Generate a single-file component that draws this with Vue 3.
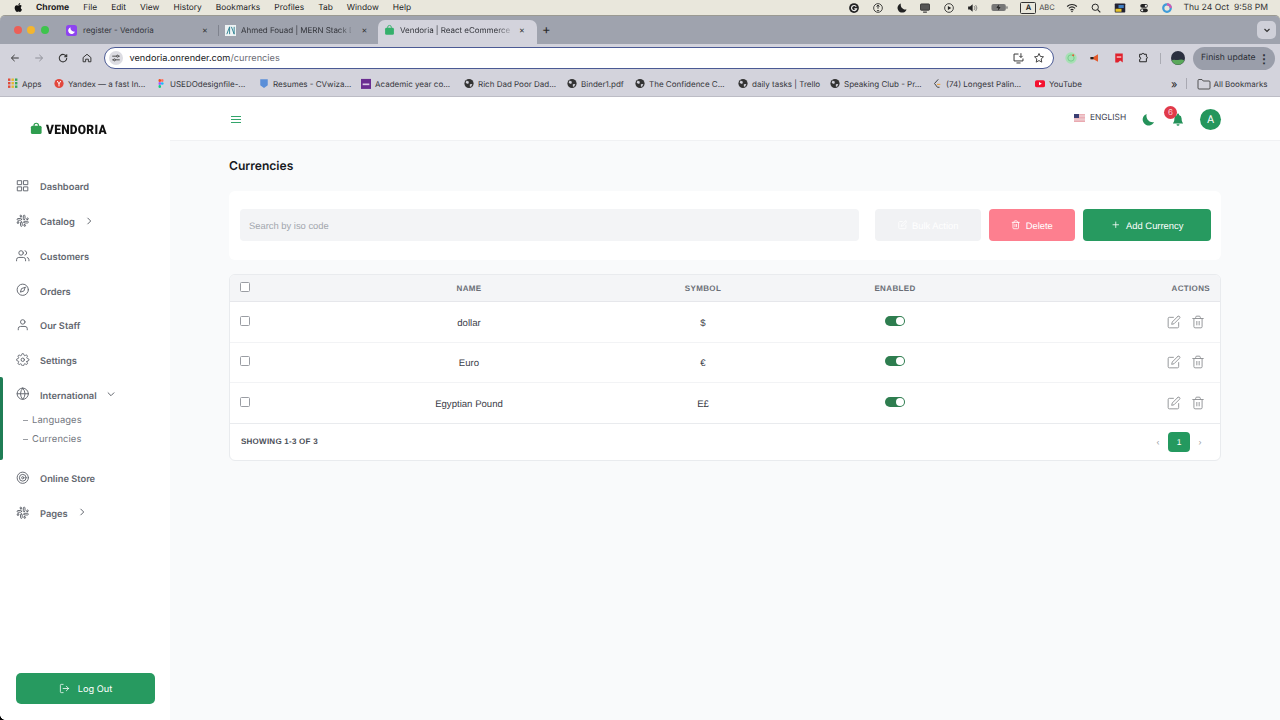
<script setup>
const menus = ['File','Edit','View','History','Bookmarks','Profiles','Tab','Window','Help']
const bookmarks = [
  { label:'Yandex — a fast In...', w:102, kind:'yandex' },
  { label:'USEDOdesignfile-...', w:103, kind:'figma' },
  { label:'Resumes - CVwiza...', w:102, kind:'cv' },
  { label:'Academic year co...', w:103, kind:'tuts' },
  { label:'Rich Dad Poor Dad...', w:103, kind:'globe' },
  { label:'Binder1.pdf', w:68, kind:'globe' },
  { label:'The Confidence C...', w:103, kind:'globe' },
  { label:'daily tasks | Trello', w:92, kind:'globe' },
  { label:'Speaking Club - Pr...', w:102, kind:'globe' },
  { label:'(74) Longest Palin...', w:103, kind:'leet' },
  { label:'YouTube', w:60, kind:'yt' }
]
const P = {
  grid:'<rect x="3" y="3" width="7" height="7"/><rect x="14" y="3" width="7" height="7"/><rect x="14" y="14" width="7" height="7"/><rect x="3" y="14" width="7" height="7"/>',
  slack:'<path d="M14.5 10c-.83 0-1.5-.67-1.5-1.5v-5c0-.83.67-1.5 1.5-1.5s1.5.67 1.5 1.5v5c0 .83-.67 1.5-1.5 1.5z"/><path d="M20.5 10H19V8.5c0-.83.67-1.5 1.5-1.5s1.5.67 1.5 1.5-.67 1.5-1.5 1.5z"/><path d="M9.5 14c.83 0 1.5.67 1.5 1.5v5c0 .83-.67 1.5-1.5 1.5S8 21.33 8 20.5v-5c0-.83.67-1.5 1.5-1.5z"/><path d="M3.5 14H5v1.5c0 .83-.67 1.5-1.5 1.5S2 16.33 2 15.5 2.67 14 3.5 14z"/><path d="M14 14.5c0-.83.67-1.5 1.5-1.5h5c.83 0 1.5.67 1.5 1.5s-.67 1.5-1.5 1.5h-5c-.83 0-1.5-.67-1.5-1.5z"/><path d="M15.5 19H14v1.5c0 .83.67 1.5 1.5 1.5s1.5-.67 1.5-1.5-.67-1.5-1.5-1.5z"/><path d="M10 9.5C10 8.67 9.33 8 8.5 8h-5C2.67 8 2 8.67 2 9.5S2.67 11 3.5 11h5c.83 0 1.5-.67 1.5-1.5z"/><path d="M8.5 5H10V3.5C10 2.67 9.33 2 8.5 2S7 2.67 7 3.5 7.67 5 8.5 5z"/>',
  users:'<path d="M17 21v-2a4 4 0 0 0-4-4H5a4 4 0 0 0-4 4v2"/><circle cx="9" cy="7" r="4"/><path d="M23 21v-2a4 4 0 0 0-3-3.87"/><path d="M16 3.13a4 4 0 0 1 0 7.75"/>',
  compass:'<circle cx="12" cy="12" r="10"/><polygon points="16.24 7.76 14.12 14.12 7.76 16.24 9.88 9.88 16.24 7.76"/>',
  user:'<path d="M20 21v-2a4 4 0 0 0-4-4H8a4 4 0 0 0-4 4v2"/><circle cx="12" cy="7" r="4"/>',
  settings:'<circle cx="12" cy="12" r="3"/><path d="M19.4 15a1.65 1.65 0 0 0 .33 1.82l.06.06a2 2 0 0 1 0 2.83 2 2 0 0 1-2.83 0l-.06-.06a1.65 1.65 0 0 0-1.82-.33 1.65 1.65 0 0 0-1 1.51V21a2 2 0 0 1-2 2 2 2 0 0 1-2-2v-.09A1.65 1.65 0 0 0 9 19.4a1.65 1.65 0 0 0-1.82.33l-.06.06a2 2 0 0 1-2.83 0 2 2 0 0 1 0-2.83l.06-.06a1.65 1.65 0 0 0 .33-1.82 1.65 1.65 0 0 0-1.51-1H3a2 2 0 0 1-2-2 2 2 0 0 1 2-2h.09A1.65 1.65 0 0 0 4.6 9a1.65 1.65 0 0 0-.33-1.82l-.06-.06a2 2 0 0 1 0-2.83 2 2 0 0 1 2.83 0l.06.06a1.65 1.65 0 0 0 1.82.33H9a1.65 1.65 0 0 0 1-1.51V3a2 2 0 0 1 2-2 2 2 0 0 1 2 2v.09a1.65 1.65 0 0 0 1 1.51 1.65 1.65 0 0 0 1.82-.33l.06-.06a2 2 0 0 1 2.83 0 2 2 0 0 1 0 2.83l-.06.06a1.65 1.65 0 0 0-.33 1.82V9a1.65 1.65 0 0 0 1.51 1H21a2 2 0 0 1 2 2 2 2 0 0 1-2 2h-.09a1.65 1.65 0 0 0-1.51 1z"/>',
  globe:'<circle cx="12" cy="12" r="10"/><line x1="2" y1="12" x2="22" y2="12"/><path d="M12 2a15.3 15.3 0 0 1 4 10 15.3 15.3 0 0 1-4 10 15.3 15.3 0 0 1-4-10 15.3 15.3 0 0 1 4-10z"/>',
  target:'<circle cx="12" cy="12" r="10"/><circle cx="12" cy="12" r="6"/><circle cx="12" cy="12" r="2"/>',
  edit:'<path d="M11 4H4a2 2 0 0 0-2 2v14a2 2 0 0 0 2 2h14a2 2 0 0 0 2-2v-7"/><path d="M18.5 2.5a2.121 2.121 0 0 1 3 3L12 15l-4 1 1-4 9.5-9.5z"/>',
  trash:'<polyline points="3 6 5 6 21 6"/><path d="M19 6v14a2 2 0 0 1-2 2H7a2 2 0 0 1-2-2V6m3 0V4a2 2 0 0 1 2-2h4a2 2 0 0 1 2 2v2"/><line x1="10" y1="11" x2="10" y2="17"/><line x1="14" y1="11" x2="14" y2="17"/>',
  logout:'<path d="M9 21H5a2 2 0 0 1-2-2V5a2 2 0 0 1 2-2h4"/><polyline points="16 17 21 12 16 7"/><line x1="21" y1="12" x2="9" y2="12"/>'
}
const nav = [
  { label:'Dashboard', icon:'grid' },
  { label:'Catalog', icon:'slack', chev:'right' },
  { label:'Customers', icon:'users' },
  { label:'Orders', icon:'compass' },
  { label:'Our Staff', icon:'user' },
  { label:'Settings', icon:'settings' },
  { label:'International', icon:'globe', chev:'down', open:true, children:['Languages','Currencies'] },
  { label:'Online Store', icon:'target' },
  { label:'Pages', icon:'slack', chev:'right' }
]
const rows = [
  { name:'dollar', symbol:'$' },
  { name:'Euro', symbol:'€' },
  { name:'Egyptian Pound', symbol:'E£' }
]
</script>

<template>
  <div class="screen">
    <div class="menubar">
      <div class="menu-left">
        <svg class="apple" viewBox="0 0 24 24"><path fill="#111" d="M17.05 12.5c0-2.5 2.05-3.7 2.14-3.76-1.17-1.7-2.98-1.94-3.62-1.96-1.54-.16-3 .9-3.78.9-.78 0-1.98-.88-3.26-.86-1.67.03-3.22.98-4.08 2.47-1.74 3.02-.45 7.5 1.25 9.95.83 1.2 1.82 2.55 3.11 2.5 1.25-.05 1.72-.8 3.23-.8s1.93.8 3.25.78c1.34-.03 2.19-1.22 3.01-2.43.95-1.39 1.34-2.74 1.36-2.81-.03-.01-2.6-1-2.61-3.98zM14.6 5.2c.69-.83 1.15-1.99 1.02-3.14-.99.04-2.19.66-2.9 1.49-.64.74-1.2 1.92-1.05 3.05 1.1.09 2.24-.56 2.93-1.4z"/></svg>
        <b>Chrome</b>
        <span v-for="m in menus" :key="m">{{ m }}</span>
      </div>
      <div class="menu-right">
        <svg class="st" viewBox="0 0 16 16"><circle cx="8" cy="8" r="6.5" fill="#222"/><path d="M11 6.2A3.4 3.4 0 1 0 11.4 9H8.4" fill="none" stroke="#eee" stroke-width="1.6"/></svg>
        <svg class="st" viewBox="0 0 16 16"><circle cx="8" cy="8" r="5.8" fill="none" stroke="#222" stroke-width="1.1"/><path d="M8 4v5M6.2 6.2 8 4l1.8 2.2M6.5 11.5h3" fill="none" stroke="#222" stroke-width="1.2"/></svg>
        <svg class="st" viewBox="0 0 16 16"><path fill="#222" d="M6.5 2a6.2 6.2 0 1 0 7.6 8A6.5 6.5 0 0 1 6.5 2z"/></svg>
        <svg class="st" viewBox="0 0 16 16"><rect x="2" y="2.5" width="12" height="8.5" rx="1" fill="#555" stroke="#222"/><path d="M5.5 13.5h5" stroke="#222" stroke-width="1.4"/></svg>
        <svg class="st" viewBox="0 0 16 16"><circle cx="8" cy="8" r="5.8" fill="none" stroke="#222" stroke-width="1.1"/><path d="M6.5 5.2 11 8l-4.5 2.8z" fill="#222"/></svg>
        <svg class="st" viewBox="0 0 16 16"><path d="M1.5 6h2.5L7.5 3v10L4 10H1.5z" fill="#222"/><path d="M9.5 5.5a3.5 3.5 0 0 1 0 5M11.5 4a6 6 0 0 1 0 8" fill="none" stroke="#666" stroke-width="1"/></svg>
        <svg class="batt" viewBox="0 0 20 10"><rect x=".5" y="1" width="16" height="8" rx="2.2" fill="#777"/><rect x="17" y="3.5" width="1.5" height="3" rx=".7" fill="#777"/><path d="M9 1.8 6 5.4h2.4L7.6 8.2l3-3.6H8.2z" fill="#111"/></svg>
        <span class="ime">A</span>
        <span class="abc">ABC</span>
        <svg class="st" viewBox="0 0 16 16"><path d="M1.5 6a9.5 9.5 0 0 1 13 0M3.8 8.4a6.3 6.3 0 0 1 8.4 0M6 10.7a3 3 0 0 1 4 0" fill="none" stroke="#222" stroke-width="1.4"/><circle cx="8" cy="12.8" r="1" fill="#222"/></svg>
        <svg class="st" viewBox="0 0 16 16"><circle cx="7" cy="7" r="4.2" fill="none" stroke="#222" stroke-width="1.3"/><path d="m10.2 10.2 3.5 3.5" stroke="#222" stroke-width="1.5"/></svg>
        <svg class="st" viewBox="0 0 16 16"><rect x="1" y="2" width="14" height="12" rx="1" fill="#223"/><rect x="2" y="9" width="8" height="4" fill="#e5c32a"/><rect x="6" y="4" width="7" height="4" fill="#3f7fc4"/></svg>
        <svg class="st" viewBox="0 0 16 16"><rect x="3" y="2.5" width="10" height="5" rx="2.5" fill="#222"/><rect x="3" y="8.5" width="10" height="5" rx="2.5" fill="#222"/><circle cx="10.5" cy="5" r="1.5" fill="#eee"/><circle cx="5.5" cy="11" r="1.5" fill="#eee"/></svg>
        <svg class="st" viewBox="0 0 16 16"><circle cx="8" cy="8" r="5" fill="none" stroke="#3f9bd8" stroke-width="3"/><path d="M8 3a5 5 0 0 1 5 5" fill="none" stroke="#d45bb0" stroke-width="3"/></svg>
        <span class="clock">Thu 24 Oct</span>
        <span class="clock clock2">9:58 PM</span>
      </div>
    </div>

    <div class="window">
      <div class="tabstrip">
        <div class="traffic"><i class="r"></i><i class="y"></i><i class="g"></i></div>
        <div class="tab tab-a">
          <span class="fav-purple"><svg viewBox="0 0 12 12"><path fill="#fff" d="M5 2.4a3.8 3.8 0 1 0 4.8 4.8A4 4 0 0 1 5 2.4z"/></svg></span>
          <span class="tab-t">register - Vendoria</span>
          <span class="x">✕</span>
        </div>
        <i class="tab-sep"></i>
        <div class="tab tab-b">
          <span class="fav-ahmed"><svg viewBox="0 0 12 12"><path d="M2 10 5 2v8M7 2l3 8V2" fill="none" stroke="#2a7f8f" stroke-width="1"/></svg></span>
          <span class="tab-t">Ahmed Fouad | MERN Stack D</span>
          <span class="x">✕</span>
        </div>
        <div class="tab tab-c">
          <svg class="fav" viewBox="0 0 12 12"><path d="M4 4V3a2 2 0 0 1 4 0v1" fill="none" stroke="#35b06c" stroke-width="1"/><rect x="1.2" y="3.6" width="9.6" height="7.6" rx="1.5" fill="#35b06c"/></svg>
          <span class="tab-t">Vendoria | React eCommerce</span>
          <span class="x">✕</span>
        </div>
        <span class="plus">+</span>
        <span class="tab-list"><svg viewBox="0 0 10 10"><path d="m2.5 4 2.5 2.5L7.5 4" fill="none" stroke="#333" stroke-width="1.2"/></svg></span>
      </div>

      <div class="toolbar">
        <svg class="tb" viewBox="0 0 16 16"><path d="M13 8H3.5M7.5 3.8 3.2 8l4.3 4.2" fill="none" stroke="#333" stroke-width="1.3"/></svg>
        <svg class="tb" viewBox="0 0 16 16"><path d="M3 8h9.5M8.5 3.8 12.8 8l-4.3 4.2" fill="none" stroke="#8d8e96" stroke-width="1.3"/></svg>
        <svg class="tb" viewBox="0 0 16 16"><path d="M12.6 6.2A5 5 0 1 0 13 8M13 3v3.4H9.6" fill="none" stroke="#333" stroke-width="1.4"/></svg>
        <svg class="tb" viewBox="0 0 16 16"><path d="M2.8 7.4 8 3l5.2 4.4V13H9.8V9.6H6.2V13H2.8z" fill="none" stroke="#333" stroke-width="1.3"/></svg>
        <div class="omni">
          <span class="site"><svg viewBox="0 0 12 12"><path d="M1.5 3.8h5M9 3.8h1.5M1.5 8.2H3M5.5 8.2h5" stroke="#333" stroke-width="1"/><circle cx="7.8" cy="3.8" r="1.2" fill="none" stroke="#333"/><circle cx="4.2" cy="8.2" r="1.2" fill="none" stroke="#333"/></svg></span>
          <span class="url">vendoria.onrender.com<em>/currencies</em></span>
          <svg class="om" viewBox="0 0 16 16"><path d="M8 2.5H2.5v8.5h11V8M5.5 13.5h5" fill="none" stroke="#333" stroke-width="1.2"/><path d="M11 1.5v5M9 4.8l2 2 2-2" fill="none" stroke="#333" stroke-width="1.2"/></svg>
          <svg class="om om2" viewBox="0 0 16 16"><path d="m8 2 1.8 3.9 4.2.5-3.1 2.9.8 4.2L8 11.4l-3.7 2.1.8-4.2L2 6.4l4.2-.5z" fill="none" stroke="#333" stroke-width="1.2"/></svg>
        </div>
        <svg class="ext e1" viewBox="0 0 16 16"><circle cx="8" cy="8" r="6.5" fill="#a8e0b5"/><circle cx="8" cy="8" r="3.6" fill="none" stroke="#6ecb86"/><circle cx="10.5" cy="4.8" r="1.2" fill="#e4593b"/></svg>
        <svg class="ext" viewBox="0 0 16 16"><path d="M2 6.5h4L12 3v10L6 9.8H2z" fill="#e4592b"/><path d="M2 6.5h4v3.3H2z" fill="#222"/></svg>
        <svg class="ext" viewBox="0 0 16 16"><path d="M3 2h10v12l-3.4-2.6L6.8 14H3z" fill="#e0212c"/><rect x="5" y="6" width="6" height="1.4" fill="#fff"/></svg>
        <svg class="ext" viewBox="0 0 16 16"><path d="M3.5 3h3.2a1.3 1.3 0 0 1 2.6 0h3.2v3.2a1.3 1.3 0 0 1 0 2.6V13H3.5V9.8a1.4 1.4 0 0 0 0-2.8z" fill="none" stroke="#222" stroke-width="1.3"/></svg>
        <i class="tb-sep"></i>
        <svg class="avatar-sm" viewBox="0 0 14 14"><circle cx="7" cy="7" r="7" fill="#2b3040"/><path d="M0.6 9.5C3 8 5 9.5 7 9s4-1 6.4.5A7 7 0 0 1 .6 9.5z" fill="#5aa85a"/></svg>
        <div class="finish"><span>Finish update</span><b>⋮</b></div>
      </div>

      <div class="bookbar">
        <div class="bm bm-apps">
          <svg class="bi" viewBox="0 0 10 10"><g v-for="yy in [0,3.5,7]" :key="yy"><rect :y="yy" x="0" width="2.4" height="2.4" fill="#e04b3a"/><rect :y="yy" x="3.5" width="2.4" height="2.4" fill="#e6b72e"/><rect :y="yy" x="7" width="2.4" height="2.4" fill="#3aa757"/></g></svg>
          <span>Apps</span>
        </div>
        <div v-for="b in bookmarks" :key="b.label" class="bm" :style="{ width: b.w + 'px' }">
          <svg v-if="b.kind==='yandex'" class="bi" viewBox="0 0 12 12"><circle cx="6" cy="6" r="5.5" fill="#e2463b"/><path d="M4 3l2 3.5L8 3M6 6.5V9.5" fill="none" stroke="#fff" stroke-width="1.2"/></svg>
          <svg v-else-if="b.kind==='figma'" class="bi" viewBox="0 0 12 12"><rect x="3" y="0.5" width="3" height="3.6" rx="1.5" fill="#f24e1e"/><rect x="6" y="0.5" width="3" height="3.6" rx="1.5" fill="#ff7262"/><rect x="3" y="4.2" width="3" height="3.6" rx="1.5" fill="#a259ff"/><circle cx="7.5" cy="6" r="1.6" fill="#1abcfe"/><rect x="3" y="7.9" width="3" height="3.6" rx="1.5" fill="#0acf83"/></svg>
          <svg v-else-if="b.kind==='cv'" class="bi" viewBox="0 0 12 12"><path d="M1.5 1h9v7L6 11.5 1.5 8z" fill="#5b8fd8"/></svg>
          <svg v-else-if="b.kind==='tuts'" class="bi" viewBox="0 0 12 12"><rect width="12" height="12" y=".5" fill="#6a2c91"/><rect x="2" y="6" width="8" height="2" fill="#d9c8e6"/></svg>
          <svg v-else-if="b.kind==='globe'" class="bi" viewBox="0 0 12 12"><circle cx="6" cy="6" r="5.5" fill="#333"/><path d="M3 2.5 6 4 5 6.5 2 5.5zM7 7l3-.5L8.5 10 7 9.5z" fill="#d3d3dc"/></svg>
          <svg v-else-if="b.kind==='leet'" class="bi" viewBox="0 0 12 12"><path d="M7.5 1 3 6l3.5 4.5H9" fill="none" stroke="#444" stroke-width="1.2"/><path d="M6 7h4" stroke="#f0a030" stroke-width="1.2"/></svg>
          <svg v-else class="bi" viewBox="0 0 12 12"><rect y="2" width="12" height="8.5" rx="2.2" fill="#f4112f"/><path d="M4.8 4.2v4L8.2 6.2z" fill="#fff"/></svg>
          <span>{{ b.label }}</span>
        </div>
        <span class="more">»</span>
        <i class="bk-sep"></i>
        <svg class="folder" viewBox="0 0 14 12"><path d="M1 2.5A1 1 0 0 1 2 1.5h3l1.2 1.5H12a1 1 0 0 1 1 1V10a1 1 0 0 1-1 1H2a1 1 0 0 1-1-1z" fill="none" stroke="#444" stroke-width=".9"/></svg>
        <span class="allb">All Bookmarks</span>
      </div>

      <div class="app">
        <aside class="sidebar">
          <div class="logo">
            <svg viewBox="0 0 14 14"><path d="M4.5 5V3.6a2.5 2.5 0 0 1 5 0V5" fill="none" stroke="#2f9e4f" stroke-width="1.3"/><rect x="1" y="3.8" width="12" height="9.4" rx="1.8" fill="#2f9e4f"/></svg>
            <span>VENDORIA</span>
          </div>
          <nav class="nav">
            <div v-for="n in nav" :key="n.label" class="nav-group" :class="{ open: n.open }">
              <div class="nav-item">
                <svg class="ni" viewBox="0 0 24 24" fill="none" stroke="currentColor" stroke-width="1.7" stroke-linecap="round" stroke-linejoin="round" v-html="P[n.icon]"></svg>
                <span class="nl">{{ n.label }}</span>
                <svg v-if="n.chev==='right'" class="chev" viewBox="0 0 10 10"><path d="m3.5 1.8 3.2 3.2-3.2 3.2" fill="none" stroke="currentColor" stroke-width="1"/></svg>
                <svg v-if="n.chev==='down'" class="chev" viewBox="0 0 10 10"><path d="m1.8 3.5 3.2 3.2 3.2-3.2" fill="none" stroke="currentColor" stroke-width="1"/></svg>
              </div>
              <div v-if="n.children" class="subs">
                <div v-for="c in n.children" :key="c" class="sub"><i></i>{{ c }}</div>
              </div>
            </div>
          </nav>
          <button class="logout">
            <svg viewBox="0 0 24 24" fill="none" stroke="currentColor" stroke-width="1.7" stroke-linecap="round" stroke-linejoin="round" v-html="P.logout"></svg>
            <span>Log Out</span>
          </button>
        </aside>

        <div class="main">
          <header class="topbar">
            <div class="burger"><i></i><i></i><i></i></div>
            <div class="top-right">
              <svg class="flag" viewBox="0 0 11 8"><rect width="11" height="8" fill="#f4f0f2"/><path d="M0 .6h11M0 2h11M0 3.4h11M0 4.8h11M0 6.2h11M0 7.5h11" stroke="#e58a94" stroke-width=".7"/><rect width="5" height="4" fill="#3a3f73"/></svg>
              <span class="lang">ENGLISH</span>
              <svg class="moon" viewBox="0 0 14 14"><path fill="#25925a" d="M5 1a6.4 6.4 0 1 0 8 8.6C8.6 11 3.6 6.6 5 1z"/></svg>
              <div class="bell-wrap">
                <svg class="bell" viewBox="0 0 12 13"><path fill="#25925a" d="M6 .6a1 1 0 0 1 1 1v.5A3.6 3.6 0 0 1 9.6 5.6c0 2.6.6 3.7 1.6 4.8H.8c1-1.1 1.6-2.2 1.6-4.8A3.6 3.6 0 0 1 5 2.1v-.5a1 1 0 0 1 1-1zM4.5 11.2h3a1.5 1.5 0 0 1-3 0z"/></svg>
                <span class="badge">6</span>
              </div>
              <span class="avatar">A</span>
            </div>
          </header>

          <section class="content">
            <h1>Currencies</h1>
            <div class="filters">
              <div class="search">Search by iso code</div>
              <button class="btn bulk">
                <svg viewBox="0 0 24 24" fill="none" stroke="currentColor" stroke-width="2" stroke-linecap="round" stroke-linejoin="round" v-html="P.edit"></svg>
                <span>Bulk Action</span>
              </button>
              <button class="btn del">
                <svg viewBox="0 0 24 24" fill="none" stroke="currentColor" stroke-width="2" stroke-linecap="round" stroke-linejoin="round" v-html="P.trash"></svg>
                <span>Delete</span>
              </button>
              <button class="btn add">
                <svg viewBox="0 0 24 24" fill="none" stroke="currentColor" stroke-width="2" stroke-linecap="round"><path d="M12 5v14M5 12h14"/></svg>
                <span>Add Currency</span>
              </button>
            </div>

            <div class="table">
              <div class="tr thead">
                <div class="c-check head-check"><i class="cb"></i></div>
                <div class="c-mid">NAME</div>
                <div class="c-mid">SYMBOL</div>
                <div class="c-mid">ENABLED</div>
                <div class="c-end">ACTIONS</div>
              </div>
              <div v-for="r in rows" :key="r.name" class="tr row">
                <div class="c-check"><i class="cb"></i></div>
                <div class="c-mid">{{ r.name }}</div>
                <div class="c-mid">{{ r.symbol }}</div>
                <div class="c-mid"><span class="toggle"><i></i></span></div>
                <div class="c-end acts">
                  <svg class="a1" viewBox="0 0 24 24" fill="none" stroke="currentColor" stroke-width="1.6" stroke-linecap="round" stroke-linejoin="round" v-html="P.edit"></svg>
                  <svg class="a2" viewBox="0 0 24 24" fill="none" stroke="currentColor" stroke-width="1.6" stroke-linecap="round" stroke-linejoin="round" v-html="P.trash"></svg>
                </div>
              </div>
              <div class="tfoot">
                <span>SHOWING 1-3 OF 3</span>
                <div class="pager">
                  <span class="pg">‹</span>
                  <span class="pg cur">1</span>
                  <span class="pg">›</span>
                </div>
              </div>
            </div>
          </section>
        </div>
      </div>
    </div>
  </div>
</template>

<style>
html, body { margin: 0; background: #000; }
</style>

<style scoped>
.screen { width: 1280px; height: 720px; overflow: hidden; background: #e9e7dc; font-family: Inter, "Liberation Sans", sans-serif; text-rendering: geometricPrecision; display: flex; flex-direction: column; position: relative; }
.screen::after { content: ""; position: absolute; left: 0; bottom: 0; width: 5px; height: 5px; background: radial-gradient(circle at 100% 0, transparent 4.5px, #000 5px); }
i { display: block; font-style: normal; }

.menubar { height: 16px; flex: none; display: flex; justify-content: space-between; align-items: center; color: #1d1d1f; font-size: 8.4px; padding: 0 12px 0 13px; box-sizing: border-box; }
.menu-left { display: flex; align-items: center; gap: 14px; }
.menu-left b { font-weight: 700; margin-left: -2px; font-size: 8.6px; }
.apple { width: 11px; height: 11px; margin-bottom: 1px; }
.menu-right { display: flex; align-items: center; gap: 11.75px; margin-bottom: 1px; }
.st { width: 12px; height: 12px; }
.batt { width: 18px; height: 9px; }
.ime { border: .8px solid #333; border-radius: 1.5px; width: 14px; height: 10px; line-height: 10px; text-align: center; font-size: 7.5px; font-weight: 600; margin-right: -9px; }
.abc { font-size: 7.5px; color: #444; }
.clock { font-size: 8.6px; color: #333; margin-left: -1.75px; white-space: nowrap; }
.clock2 { margin-left: -6.75px; }

.window { flex: 1; min-height: 0; display: flex; flex-direction: column; border-radius: 5px 5px 0 0; overflow: hidden; background: #d3d3dc; box-shadow: 0 -1px 0 #9b9a92; }
.tabstrip { height: 28px; flex: none; background: #9fa3ae; display: flex; align-items: flex-end; position: relative; }
.traffic { display: flex; gap: 5.3px; padding: 0 0 10px 14px; width: 57px; box-sizing: border-box; align-self: flex-end; }
.traffic i { width: 8px; height: 8px; border-radius: 50%; flex: none; }
.traffic .r { background: #ec5f57; } .traffic .y { background: #f3b52f; } .traffic .g { background: #3ec44c; }
.tab { height: 24px; display: flex; align-items: center; font-size: 8px; color: #33353b; box-sizing: border-box; position: relative; padding-bottom: 4px; }
.tab-t { white-space: nowrap; }
.tab-a { width: 161px; padding-left: 9px; }
.tab-a .tab-t { width: 118px; margin-left: 6px; }
.tab-b { width: 159px; padding-left: 6px; }
.tab-b .tab-t, .tab-c .tab-t { width: 110px; margin-left: 5px; letter-spacing: -.02px; -webkit-mask-image: linear-gradient(90deg,#000 88%,rgba(0,0,0,.25)); mask-image: linear-gradient(90deg,#000 88%,rgba(0,0,0,.25)); }
.tab-c { width: 159px; padding-left: 6px; background: #d3d3dc; border-radius: 7px 7px 0 0; }
.tab .x { font-size: 7px; margin-left: 9px; color: #333; }
.tab-a .x { margin-left: 1px; }
.tab-b .x { margin-left: 10.5px; }
.tab-sep { width: 1px; height: 11px; background: #7f838e; margin-bottom: 8px; }
.fav-purple { width: 11px; height: 11px; background: #8e44f0; border-radius: 2.5px; display: block; flex: none; }
.fav-purple svg, .fav-ahmed svg { display: block; width: 11px; height: 11px; }
.fav-ahmed { width: 11px; height: 11px; background: #eef3f4; display: block; flex: none; }
.fav { width: 11px; height: 12px; flex: none; }
.plus { font-size: 13px; color: #2b2b2b; margin: 0 0 6px 5px; line-height: 16px; }
.tab-list { position: absolute; right: 4px; top: 5px; width: 19px; height: 18px; border-radius: 5px; background: #cfd0d9; display: flex; align-items: center; justify-content: center; }
.tab-list svg { width: 10px; height: 10px; }

.toolbar { height: 26px; flex: none; display: flex; align-items: center; padding: 2px 0 0 9px; box-sizing: border-box; position: relative; }
.tb { width: 12px; height: 12px; margin-right: 12px; flex: none; }
.omni { width: 950px; height: 22.5px; flex: none; box-sizing: border-box; margin-left: -1px; margin-right: 10px; border: 1.5px solid #4b5a94; border-radius: 12px; background: #fff; display: flex; align-items: center; padding: 0 8px 0 3px; }
.site { width: 14px; height: 14px; border-radius: 50%; background: #dcdce2; display: flex; align-items: center; justify-content: center; margin-left: 1px; flex: none; }
.site svg { width: 10px; height: 10px; }
.url { font-size: 9.2px; color: #202124; margin-left: 6.5px; flex: 1; }
.url em { font-style: normal; color: #6a6b73; }
.om { width: 13px; height: 13px; flex: none; }
.om2 { margin-left: 8.5px; width: 12px; height: 12px; }
.ext { width: 12px; height: 12px; margin-right: 12px; flex: none; }
.e1 { width: 14px; height: 14px; margin-right: 11px; }
.tb-sep { width: 1px; height: 11px; background: #aaabb3; margin: 0 10px 0 -1px; flex: none; }
.avatar-sm { width: 14px; height: 14px; margin-right: 8px; flex: none; }
.finish { width: 82px; height: 23px; flex: none; border-radius: 12px; background: #9a9eaa; display: flex; align-items: center; justify-content: space-between; padding: 0 5px 0 8px; box-sizing: border-box; font-size: 8.6px; color: #2b2e36; white-space: nowrap; }
.finish b { font-size: 12px; }

.bookbar { flex: none; display: flex; align-items: center; padding: 1px 0 0 8px; font-size: 8px; color: #33353b; border-bottom: 1px solid #bcbcc5; box-sizing: border-box; height: 27px; }
.bm { display: flex; align-items: center; gap: 4px; white-space: nowrap; flex: none; }
.bm-apps { width: 46px; }
.bi { width: 10px; height: 11px; flex: none; }
.more { margin-left: 76px; font-size: 11px; line-height: 10px; color: #222; flex: none; }
.bk-sep { width: 1px; height: 11px; background: #a9a9b2; margin: 0 10px 0 9px; flex: none; }
.folder { width: 14px; height: 12px; margin-right: 2px; flex: none; }
.allb { white-space: nowrap; }

.app { flex: 1; min-height: 0; display: flex; background: #f9fafb; }
.sidebar { width: 170px; flex: none; background: #fff; display: flex; flex-direction: column; position: relative; }
.logo { height: 64px; padding: 3px 0 0 30px; box-sizing: border-box; display: flex; align-items: center; gap: 3px; font-family: Roboto, sans-serif; }
.logo svg { width: 12.5px; height: 13px; margin-top: -4px; flex: none; }
.logo span { font-size: 13px; font-weight: 900; color: #111; letter-spacing: .3px; transform: scaleX(.92); transform-origin: left center; }
.nav { margin-top: 7.6px; flex: 1; }
.nav-group { padding-left: 16px; position: relative; }
.nav-group.open { padding-bottom: 11px; }
.nav-group.open::before { content: ""; position: absolute; left: 0; top: 0; bottom: 0; width: 3px; background: #1f7d55; border-radius: 0 2px 2px 0; }
.nav-item { height: 34.7px; display: flex; align-items: center; color: #63676f; font-size: 9.3px; font-weight: 600; }
.nl { padding-top: 4px; }
.ni { width: 13.5px; height: 13.5px; margin-right: 10.5px; flex: none; }
.chev { width: 10px; height: 10px; margin-left: 9px; }
.subs { margin-top: 0; }
.sub { height: 19px; display: flex; align-items: center; font-size: 9.4px; color: #74787f; letter-spacing: .1px; padding-left: 7px; }
.sub i { width: 5px; height: 1px; background: #9a9da3; margin-right: 4px; }
.logout { height: 31px; width: 139px; margin: 0 0 16px 16px; border: 0; border-radius: 5px; background: #279a60; color: #fff; display: flex; align-items: center; justify-content: center; gap: 8px; font: 9.2px Inter, sans-serif; text-rendering: geometricPrecision; }
.logout span { padding-top: 2px; }
.logout svg { width: 11px; height: 11px; }

.main { flex: 1; min-width: 0; display: flex; flex-direction: column; }
.topbar { height: 44px; flex: none; background: #fff; box-sizing: border-box; border-bottom: 1px solid #f0f1f3; padding: 0 59px 0 61px; display: flex; align-items: center; justify-content: space-between; }
.burger { width: 10px; display: flex; flex-direction: column; gap: 2px; margin-top: 1px; }
.burger i { height: 1px; background: #33a56b; }
.top-right { display: flex; align-items: center; padding-top: 1px; }
.flag { width: 11px; height: 8px; margin-top: -3px; margin-right: 5px; flex: none; }
.lang { font-size: 8.4px; color: #3d4250; margin-top: -2px; width: 36px; flex: none; white-space: nowrap; }
.moon { width: 13px; height: 13px; margin-left: 16px; flex: none; }
.bell-wrap { position: relative; width: 12px; height: 13px; margin-left: 17px; flex: none; }
.bell { width: 12px; height: 13px; display: block; }
.badge { position: absolute; left: -8px; top: -7px; width: 13px; height: 13px; border-radius: 50%; background: #e13a4a; color: #fbd5d8; font-size: 8px; line-height: 13px; text-align: center; }
.avatar { width: 21px; height: 21px; border-radius: 50%; background: #24965c; color: #fff; font-size: 10.5px; line-height: 21px; text-align: center; margin-left: 16px; font-weight: 400; flex: none; }

.content { padding: 0 59px; font-family: "Liberation Sans", Arial, sans-serif; }
h1 { margin: 0; font-family: Inter, sans-serif; font-size: 12.1px; font-weight: 600; color: #16181d; line-height: 16px; padding-top: 17px; height: 50px; box-sizing: border-box; }
.filters { height: 69px; box-sizing: border-box; background: #fff; border-radius: 6px; display: flex; align-items: center; padding: 0 10.5px 1px 11px; gap: 8px; }
.search { width: 619px; height: 32px; margin-right: 8px; background: #f3f4f6; border-radius: 4px; padding-left: 9px; box-sizing: border-box; display: flex; align-items: center; font-size: 9.4px; color: #a2a6ad; flex: none; }
.btn { height: 32px; border: 0; border-radius: 4px; color: #fff; display: flex; align-items: center; justify-content: center; gap: 5px; font: 9.4px "Liberation Sans", sans-serif; text-rendering: geometricPrecision; flex: none; }
.btn svg { width: 9.5px; height: 9.5px; }
.bulk { width: 106px; background: #f1f2f4; color: #fff; }
.del { width: 86px; background: #fd7f8f; }
.add { width: 128px; background: #279a60; gap: 6px; }
.table { margin-top: 14px; background: #fff; border: 1px solid #e9ebee; border-radius: 6px; overflow: hidden; }
.tr { display: grid; grid-template-columns: 30px 418px 50px 334px 1fr; align-items: center; }
.thead { height: 26px; background: #f4f5f7; border-bottom: 1px solid #e6e7eb; color: #6a6e76; font-size: 8px; font-weight: 700; letter-spacing: .35px; }
.row { height: 40.67px; box-sizing: border-box; font-size: 9.6px; color: #3c4049; border-bottom: 1px solid #f2f3f5; }
.row:nth-last-child(2) { border-bottom: 1px solid #e9ebee; }
.c-check { padding-left: 10px; }
.head-check { margin-top: -3px; }
.row .c-check { margin-top: -2px; }
.c-mid { text-align: center; }
.row .c-mid { padding-top: 3px; }
.c-end { text-align: right; padding-right: 10px; }
.cb { width: 8px; height: 8px; border: 1px solid #9a9da3; border-radius: 1.5px; background: #fff; }
.toggle { display: inline-block; width: 20px; height: 10px; border-radius: 6px; background: #2e7d4f; position: relative; vertical-align: middle; margin-top: -5px; }
.toggle i { position: absolute; right: 1px; top: 1px; width: 8px; height: 8px; border-radius: 50%; background: #fff; }
.acts { display: flex; justify-content: flex-end; align-items: center; color: #8f9195; padding-right: 15px; }
.a1 { width: 14px; height: 14px; margin-right: 10px; }
.a2 { width: 14px; height: 14px; }
.tfoot { height: 36px; display: flex; justify-content: space-between; align-items: center; padding: 0 10px 0 11px; color: #4a4e57; font-size: 8px; font-weight: 700; letter-spacing: .25px; }
.pager { display: flex; align-items: center; }
.pg { width: 20px; text-align: center; font-size: 9px; color: #9a9da3; font-weight: 400; }
.pg.cur { width: 22px; height: 20px; line-height: 20px; border-radius: 4px; background: #24995f; color: #fff; font-weight: 400; font-size: 8.5px; letter-spacing: 0; }
</style>
